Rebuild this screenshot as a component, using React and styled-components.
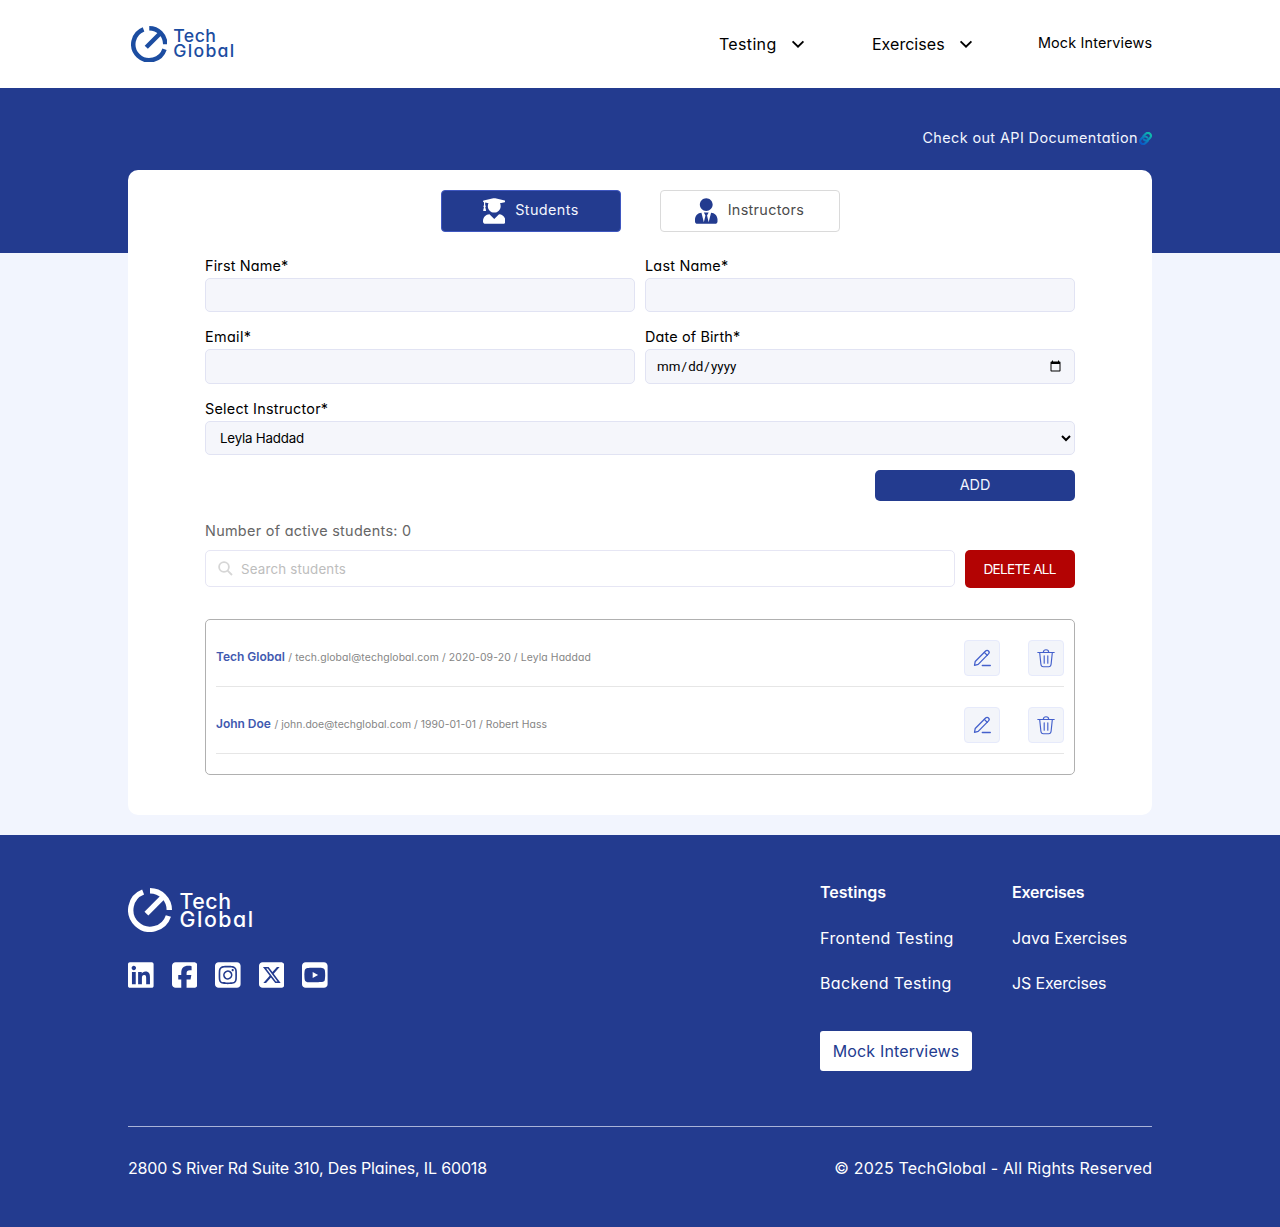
import React from "react";
import styled, { createGlobalStyle } from "styled-components";
import {
  FaLinkedin,
  FaSquareFacebook,
  FaSquareInstagram,
  FaSquareXTwitter,
  FaSquareYoutube,
} from "react-icons/fa6";
import { FaUserGraduate, FaUserTie } from "react-icons/fa";

const NAVY = "#233b8f";

const GlobalStyle = createGlobalStyle`
  *, *::before, *::after { box-sizing: border-box; }
  body {
    margin: 0;
    background: #fff;
    color: #000;
    font-family: Inter, "Open Sans", sans-serif;
    font-feature-settings: "cv11";
    font-size: 16px;
    line-height: 24px;
  }
  a { color: inherit; text-decoration: none; }
`;

const Copy = styled.span`
  display: inline-block;
  white-space: nowrap;
  letter-spacing: ${(p) => p.$track || 0}px;
  margin-right: ${(p) => -(p.$track || 0)}px;
`;

const Container = styled.div`
  width: 1024px;
  margin: 0 auto;
`;

/* Header */
const Header = styled.header`
  height: 88px;
  background: #fff;
`;

const HeaderInner = styled(Container)`
  height: 88px;
  display: flex;
  align-items: center;
  justify-content: space-between;
`;

const Nav = styled.nav`
  display: flex;
  align-items: center;
`;

const NavItem = styled.a`
  display: flex;
  align-items: center;
  gap: 15px;
  margin-right: ${(p) => p.$gap}px;
  font-size: 16px;
`;

const NavLabel = styled.span`
  width: ${(p) => p.$width}px;
  margin-top: -1px;
  white-space: nowrap;
  letter-spacing: ${(p) => p.$track}px;
`;

const NavLink = styled.a`
  font-size: 14.4px;
  line-height: 22px;
  margin-bottom: 2px;
`;

/* Logo */
const LogoLink = styled.a`
  display: flex;
  align-items: flex-start;
  gap: ${(p) => 7.5 * p.$scale}px;
  margin-left: ${(p) => p.$inset || 0}px;
  color: ${(p) => p.$color};
`;

const LogoWords = styled.span`
  display: flex;
  flex-direction: column;
  padding-top: ${(p) => 3.8 * p.$scale}px;
  font-size: ${(p) => 21.3 * p.$scale}px;
  line-height: ${(p) => 18 * p.$scale}px;
  font-weight: 500;
`;

const LogoWord = styled.span`
  letter-spacing: ${(p) => p.$track}px;
`;

function Logo({ color, scale, inset }) {
  return (
    <LogoLink href="#" $color={color} $scale={scale} $inset={inset}>
      <svg width={44 * scale} height={44 * scale} viewBox="-22 -22 44 44" fill="none">
        <g stroke={color} strokeWidth="5.4">
          <path d="M18.4 6A19.3 19.3 0 1 1 -6.9 -18" />
          <path d="M0 -19.3A19.3 19.3 0 0 1 19.3 0" />
          <path d="M-3.6 3.6L13.6 -13.6" />
        </g>
      </svg>
      <LogoWords $scale={scale}>
        <LogoWord $track={0.55 * scale}>Tech</LogoWord>
        <LogoWord $track={1.55 * scale}>Global</LogoWord>
      </LogoWords>
    </LogoLink>
  );
}

const Chevron = () => (
  <svg width="14" height="10" viewBox="0 0 14 10" fill="none">
    <path d="M1.6 2.4L7 7.7L12.4 2.4" stroke="#000" strokeWidth="1.9" />
  </svg>
);

/* Main */
const Main = styled.main`
  padding: 38px 0 20px;
  background: linear-gradient(${NAVY} 165px, #f2f5fe 165px);
`;

const ApiLink = styled.a`
  display: flex;
  justify-content: flex-end;
  align-items: center;
  gap: 1.5px;
  height: 24px;
  font-size: 14.4px;
  color: #f2f5fe;
`;

const Card = styled.section`
  height: 645px;
  margin-top: 20px;
  padding: 20px 77px 40px;
  border-radius: 10px;
  background: #fff;
`;

const Tabs = styled.div`
  display: flex;
  justify-content: center;
  gap: 39px;
  padding-left: 1px;
`;

const Tab = styled.button`
  display: flex;
  align-items: center;
  justify-content: center;
  gap: 10px;
  width: 180px;
  height: 42px;
  padding: 0 1px 0 0;
  border: 1px solid ${(p) => (p.$active ? "#3f57c0" : "#dadada")};
  border-radius: 4px;
  background: ${(p) => (p.$active ? NAVY : "#fff")};
  color: ${(p) => (p.$active ? "#f2f5fe" : "#4b4b4b")};
  font: inherit;
  font-size: 14.4px;

  span { padding-bottom: 2px; }

  svg {
    width: 22.5px;
    height: 26px;
    color: ${(p) => (p.$active ? "#fff" : NAVY)};
  }
`;

const Form = styled.form`
  display: grid;
  grid-template-columns: 1fr 1fr;
  column-gap: 10px;
  row-gap: 13px;
  margin-top: 22px;
`;

const Field = styled.label`
  display: flex;
  flex-direction: column;
  grid-column: ${(p) => (p.$wide ? "1 / -1" : "auto")};
  font-size: 14.4px;
`;

const control = `
  width: 100%;
  height: 34.4px;
  border: 1px solid #e1e3f3;
  border-radius: 5px;
  background: #f5f6fb;
  color: #000;
  outline: none;
`;

const Input = styled.input`
  ${control}
  padding: 0 10px;
  font: 13.333px Roboto, sans-serif;
  letter-spacing: 0.08px;
`;

const Select = styled.select`
  ${control}
  padding: 0 0 0 10px;
  font: 13.333px Inter, sans-serif;
  font-feature-settings: normal;
  letter-spacing: -0.2px;
`;

const Actions = styled.div`
  display: flex;
  justify-content: flex-end;
  margin-top: 15px;
`;

const AddButton = styled.button`
  width: 200px;
  height: 31px;
  padding: 0 0 1px;
  border: 0;
  border-radius: 5px;
  background: ${NAVY};
  color: #f2f5fe;
  font: inherit;
  font-size: 14.4px;
`;

const Count = styled.p`
  margin: 18px 0 7px;
  font-size: 14.4px;
  color: #666;
`;

const SearchRow = styled.div`
  display: flex;
  align-items: flex-start;
  gap: 10px;
`;

const SearchBox = styled.div`
  flex: 1;
  display: flex;
  align-items: center;
  gap: 8px;
  height: 37px;
  padding: 0 12px;
  border: 1px solid #e6e6f4;
  border-radius: 5px;
  background: #fff;
`;

const SearchInput = styled.input`
  flex: 1;
  padding: 0;
  border: 0;
  outline: none;
  background: none;
  font: 13.333px Inter, sans-serif;
  font-feature-settings: normal;
  letter-spacing: 0.18px;

  &::placeholder { color: #bdbdbd; }
`;

const SearchIcon = () => (
  <svg width="15" height="15" viewBox="0 0 15 15" fill="none" stroke="#d6d6d6" strokeWidth="1.8">
    <circle cx="6" cy="6" r="4.9" />
    <path d="M9.6 9.6L14 14" />
  </svg>
);

const DeleteAll = styled.button`
  width: 110px;
  height: 38px;
  padding: 0;
  border: 0;
  border-radius: 5px;
  background: #b30303;
  color: #fff;
  font: inherit;
  font-size: 13.6px;
`;

const List = styled.ul`
  margin: 31px 0 0;
  padding: 0 10px 20px;
  border: 1px solid #b0b0b0;
  border-radius: 5px;
  list-style: none;
`;

const Row = styled.li`
  display: flex;
  align-items: center;
  gap: 28px;
  padding: 20px 0 10px;
  border-bottom: 1px solid #e6e6e6;
`;

const Person = styled.div`
  flex: 1;
  display: flex;
  align-items: baseline;
  gap: 3.5px;
  margin-top: -2px;
`;

const Name = styled.span`
  font-size: 12px;
  font-weight: 600;
  color: #4159b0;
  letter-spacing: -0.02px;
`;

const Details = styled.span`
  font-size: 10.4px;
  color: #858585;
  letter-spacing: ${(p) => p.$track}px;
`;

const IconButton = styled.button`
  display: flex;
  align-items: center;
  justify-content: center;
  width: 36px;
  height: 36px;
  padding: 0;
  border: 1px solid #e6eafb;
  border-radius: 4px;
  background: #f3f5fa;
`;

const PencilIcon = () => (
  <svg width="18" height="18" viewBox="0 0 18 18" fill="none" stroke="#4460cc" strokeWidth="1.3" strokeLinejoin="round" strokeLinecap="round">
    <path d="M1.5 16.4L2.2 12.5L12.6 2C13.4 1.2 14.7 1.2 15.5 2S16.3 4.1 15.5 4.9L5.2 15.4Z" />
    <path d="M11.3 3.4L14.2 6.2" />
    <path d="M9.3 16.5H17.3" />
  </svg>
);

const TrashIcon = () => (
  <svg width="18" height="19" viewBox="0 0 18 19" fill="none" stroke="#4460cc" strokeWidth="1.15" strokeLinecap="round" strokeLinejoin="round">
    <path d="M0.8 3.5H17.2" />
    <path d="M6.3 3.4C6.3 -0.1 11.7 -0.1 11.7 3.4" />
    <path d="M2.7 3.7L3.9 15.3Q4.2 17.7 6.3 17.7H11.7Q13.8 17.7 14.1 15.3L15.3 3.7" />
    <path d="M7.2 6.7V14.2M10.8 6.7V14.2" />
  </svg>
);

const LinkIcon = () => (
  <svg width="13" height="13" viewBox="1 1 22 22" fill="none" stroke="url(#link-fade)" strokeWidth="3.6" strokeLinecap="round">
    <defs>
      <linearGradient id="link-fade" gradientUnits="userSpaceOnUse" x1="3" y1="21" x2="21" y2="3">
        <stop offset="0" stopColor="#0a50c8" />
        <stop offset="0.5" stopColor="#0b86bd" />
        <stop offset="1" stopColor="#0fc4a8" />
      </linearGradient>
    </defs>
    <path d="M9 13.5a5 5 0 0 0 7.54.54l3-3a5 5 0 0 0-7.07-7.07l-4 4" />
    <path d="M15 10.5a5 5 0 0 0-7.54-.54l-3 3a5 5 0 0 0 7.07 7.07l4-4" />
  </svg>
);

/* Footer */
const Footer = styled.footer`
  height: 392px;
  background: ${NAVY};
  color: #fff;
`;

const FooterTop = styled(Container)`
  display: flex;
  justify-content: space-between;
  height: 292px;
  padding-top: 45px;
  border-bottom: 1px solid #a9b3d8;
`;

const Brand = styled.div`
  padding-top: 8px;
`;

const Socials = styled.div`
  display: flex;
  gap: 18px;
  margin-top: 28px;

  svg { width: 25.6px; height: 30px; display: block; }
`;

const Columns = styled.div`
  display: flex;
  width: 332px;
`;

const Column = styled.div`
  width: ${(p) => p.$width}px;
  display: flex;
  flex-direction: column;
  align-items: flex-start;
  gap: 21.5px;
`;

const Heading = styled.h4`
  margin: 0;
  font-size: 16px;
  font-weight: 600;
  letter-spacing: ${(p) => p.$track}px;
`;

const MockButton = styled.a`
  display: flex;
  align-items: center;
  justify-content: center;
  width: 152px;
  height: 40px;
  margin-top: 14.5px;
  padding-bottom: 1px;
  border-radius: 3px;
  background: #fff;
  color: ${NAVY};
`;

const FooterBottom = styled(Container)`
  display: flex;
  justify-content: space-between;
  padding-top: 29px;
`;

const students = [
  { name: "Tech Global", details: "/ tech.global@techglobal.com / 2020-09-20 / Leyla Haddad", track: 0.11 },
  { name: "John Doe", details: "/ john.doe@techglobal.com / 1990-01-01 / Robert Hass", track: 0.05 },
];

export default function App() {
  return (
    <>
      <GlobalStyle />
      <Header>
        <HeaderInner>
          <Logo color="#1c4da1" scale={0.83} inset={2.5} />
          <Nav>
            <NavItem href="#" $gap={67}><NavLabel $width={57} $track={0.35}>Testing</NavLabel><Chevron /></NavItem>
            <NavItem href="#" $gap={65}><NavLabel $width={72} $track={0.05}>Exercises</NavLabel><Chevron /></NavItem>
            <NavLink href="#"><Copy $track={0.16}>Mock Interviews</Copy></NavLink>
          </Nav>
        </HeaderInner>
      </Header>

      <Main>
        <Container>
          <ApiLink href="#"><Copy $track={0.41}>Check out API Documentation</Copy><LinkIcon /></ApiLink>
          <Card>
            <Tabs>
              <Tab type="button" $active><FaUserGraduate /><Copy $track={0.4}>Students</Copy></Tab>
              <Tab type="button"><FaUserTie /><Copy $track={0.32}>Instructors</Copy></Tab>
            </Tabs>
            <Form>
              <Field><Copy $track={0.16}>First Name*</Copy><Input type="text" /></Field>
              <Field><Copy $track={0.22}>Last Name*</Copy><Input type="text" /></Field>
              <Field><Copy $track={0.35}>Email*</Copy><Input type="email" /></Field>
              <Field><Copy $track={0.15}>Date of Birth*</Copy><Input type="date" /></Field>
              <Field $wide>
                <Copy $track={0.23}>Select Instructor*</Copy>
                <Select defaultValue="Leyla Haddad"><option>Leyla Haddad</option></Select>
              </Field>
            </Form>
            <Actions><AddButton type="button">ADD</AddButton></Actions>
            <Count><Copy $track={0.3}>Number of active students: 0</Copy></Count>
            <SearchRow>
              <SearchBox><SearchIcon /><SearchInput placeholder="Search students" /></SearchBox>
              <DeleteAll type="button"><Copy $track={-0.7}>DELETE ALL</Copy></DeleteAll>
            </SearchRow>
            <List>
              {students.map((s) => (
                <Row key={s.name}>
                  <Person><Name>{s.name}</Name><Details $track={s.track}>{s.details}</Details></Person>
                  <IconButton type="button" aria-label="Edit"><PencilIcon /></IconButton>
                  <IconButton type="button" aria-label="Delete"><TrashIcon /></IconButton>
                </Row>
              ))}
            </List>
          </Card>
        </Container>
      </Main>

      <Footer>
        <FooterTop>
          <Brand>
            <Logo color="#fff" scale={1} />
            <Socials>
              <FaLinkedin /><FaSquareFacebook /><FaSquareInstagram /><FaSquareXTwitter /><FaSquareYoutube />
            </Socials>
          </Brand>
          <Columns>
            <Column $width={192}>
              <Heading $track={0.02}>Testings</Heading>
              <Copy as="a" $track={0.41}>Frontend Testing</Copy>
              <Copy as="a" $track={0.37}>Backend Testing</Copy>
              <MockButton href="#"><Copy $track={0.16}>Mock Interviews</Copy></MockButton>
            </Column>
            <Column $width={140}>
              <Heading $track={-0.25}>Exercises</Heading>
              <Copy as="a" $track={0.08}>Java Exercises</Copy>
              <Copy as="a" $track={-0.16}>JS Exercises</Copy>
            </Column>
          </Columns>
        </FooterTop>
        <FooterBottom>
          <Copy $track={-0.15}>2800 S River Rd Suite 310, Des Plaines, IL 60018</Copy>
          <Copy $track={0.17}>© 2025 TechGlobal - All Rights Reserved</Copy>
        </FooterBottom>
      </Footer>
    </>
  );
}
